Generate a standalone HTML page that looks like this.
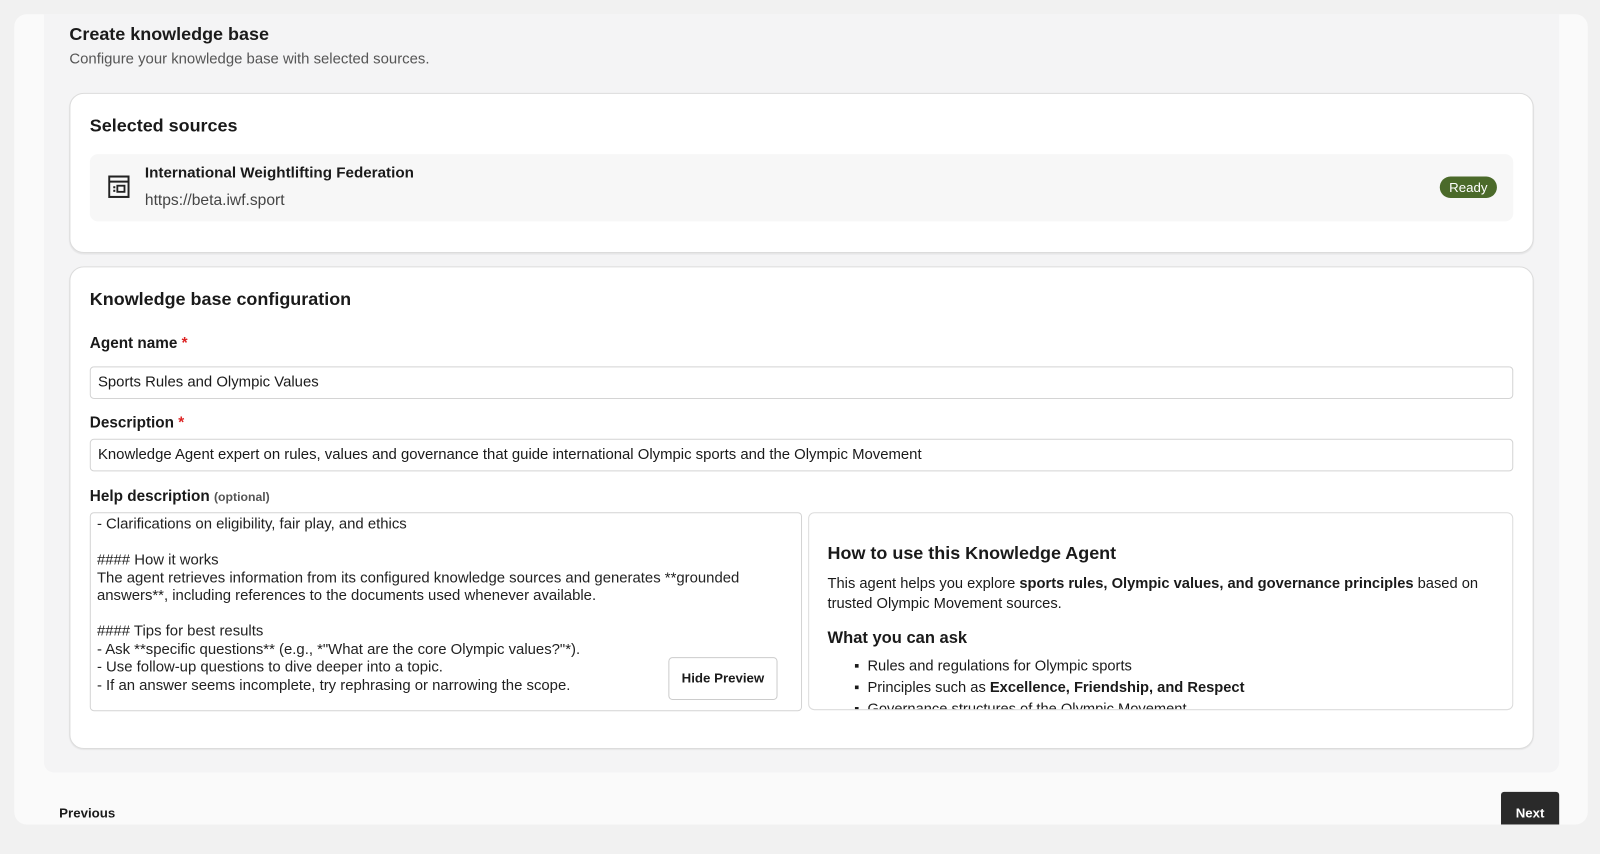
<!DOCTYPE html>
<html><head><meta charset="utf-8"><style>
*{box-sizing:border-box;margin:0;padding:0}
body{width:1600px;height:837px;background:#f1f1f1;font-family:"Liberation Sans",sans-serif;color:#1a1a1a;position:relative;overflow:hidden}
#wrap{position:absolute;left:0;top:0;width:1568px;height:820px;transform:scale(1.0204);transform-origin:0 0}
.abs{position:absolute}
.outer{left:14px;top:14px;width:1542px;height:794px;background:#fafafa;border-radius:12px}
.panel{left:43px;top:14px;width:1485px;height:743px;background:#f4f4f5;border-radius:0 0 10px 10px}
.card{left:68px;width:1435px;background:#fff;border:1px solid #dcdcdc;border-radius:14px;box-shadow:0 1px 1px rgba(0,0,0,.06)}
h1{font-size:17.6px;font-weight:bold}
.lbl{font-size:15px;font-weight:bold}
.star{color:#d22}
.inp{left:88px;width:1395px;height:32px;border:1px solid #d4d4d4;border-radius:4px;background:#fff;font-size:14.6px;padding-left:7px;line-height:30px}
.ta{font-size:14.6px;line-height:17.5px;color:#222}
</style></head><body>
<div id="wrap">
<div class="abs outer"></div>
<div class="abs panel"></div>
<div class="abs" style="left:68px;top:23px"><h1>Create knowledge base</h1></div>
<div class="abs" style="left:68px;top:50px;font-size:14.6px;color:#555">Configure your knowledge base with selected sources.</div>

<div class="abs card" style="top:91px;height:157px"></div>
<div class="abs" style="left:88px;top:113px"><h1>Selected sources</h1></div>
<div class="abs" style="left:88px;top:151px;width:1395px;height:66px;background:#f7f7f7;border-radius:8px"></div>
<svg class="abs" style="left:106px;top:172px" width="21" height="22" viewBox="0 0 21 22"><rect x="1" y="1" width="19" height="20" fill="none" stroke="#222" stroke-width="2"/><line x1="1" y1="6" x2="20" y2="6" stroke="#222" stroke-width="2"/><rect x="9" y="10" width="7" height="6" fill="none" stroke="#222" stroke-width="1.8"/><rect x="5" y="10.5" width="2" height="2" fill="#222"/><rect x="5" y="14" width="2" height="2" fill="#222"/></svg>
<div class="abs" style="left:142px;top:162px;font-size:14.9px;font-weight:bold">International Weightlifting Federation</div>
<div class="abs" style="left:142px;top:188px;font-size:15.3px;color:#444">https://beta.iwf.sport</div>
<div class="abs" style="left:1411px;top:173px;width:56px;height:21px;background:#4b6a2a;border-radius:11px;color:#fff;font-size:13px;text-align:center;line-height:21px">Ready</div>

<div class="abs card" style="top:261px;height:473px"></div>
<div class="abs" style="left:88px;top:283px"><h1>Knowledge base configuration</h1></div>
<div class="abs lbl" style="left:88px;top:328px">Agent name <span class="star">*</span></div>
<div class="abs inp" style="top:359px">Sports Rules and Olympic Values</div>
<div class="abs lbl" style="left:88px;top:406px">Description <span class="star">*</span></div>
<div class="abs inp" style="top:430px">Knowledge Agent expert on rules, values and governance that guide international Olympic sports and the Olympic Movement</div>
<div class="abs lbl" style="left:88px;top:478px">Help description <span style="font-size:12px;color:#555">(optional)</span></div>

<div class="abs" style="left:88px;top:502px;width:698px;height:195px;border:1px solid #d4d4d4;border-radius:4px;background:#fff;overflow:hidden">
<div class="abs ta" style="left:6px;top:3px;white-space:pre">- Clarifications on eligibility, fair play, and ethics

#### How it works
The agent retrieves information from its configured knowledge sources and generates **grounded
answers**, including references to the documents used whenever available.

#### Tips for best results
- Ask **specific questions** (e.g., *"What are the core Olympic values?"*).
- Use follow-up questions to dive deeper into a topic.
- If an answer seems incomplete, try rephrasing or narrowing the scope.</div>
<div class="abs" style="left:566px;top:141px;width:107px;height:42px;border:1px solid #ccc;border-radius:4px;background:#fff;font-size:13px;font-weight:bold;text-align:center;line-height:40px">Hide Preview</div>
</div>

<div class="abs" style="left:792px;top:502px;width:691px;height:194px;border:1px solid #dcdcdc;border-radius:6px;background:#fff;overflow:hidden">
<div class="abs" style="left:18px;top:29px;font-size:17.6px;font-weight:bold">How to use this Knowledge Agent</div>
<div class="abs" style="left:18px;top:60px;width:660px;font-size:14.4px;line-height:19.5px">This agent helps you explore <b>sports rules, Olympic values, and governance principles</b> based on trusted Olympic Movement sources.</div>
<div class="abs" style="left:18px;top:113px;font-size:16.2px;font-weight:bold">What you can ask</div>
<div class="abs" style="left:44px;top:140px;font-size:14.4px;line-height:21px">
<div>▪&nbsp; Rules and regulations for Olympic sports</div>
<div>▪&nbsp; Principles such as <b>Excellence, Friendship, and Respect</b></div>
<div>▪&nbsp; Governance structures of the Olympic Movement</div>
</div></div>

<div class="abs" style="left:58px;top:789px;font-size:13px;font-weight:bold">Previous</div>
<div class="abs" style="left:1471px;top:776px;width:57px;height:40px;background:#2a2a2a;border-radius:3px;color:#fff;font-size:13px;font-weight:bold;padding-top:13px;text-align:center">Next</div>
<div class="abs" style="left:0;top:808px;width:1600px;height:29px;background:#f1f1f1"></div>
</div>
</body></html>
